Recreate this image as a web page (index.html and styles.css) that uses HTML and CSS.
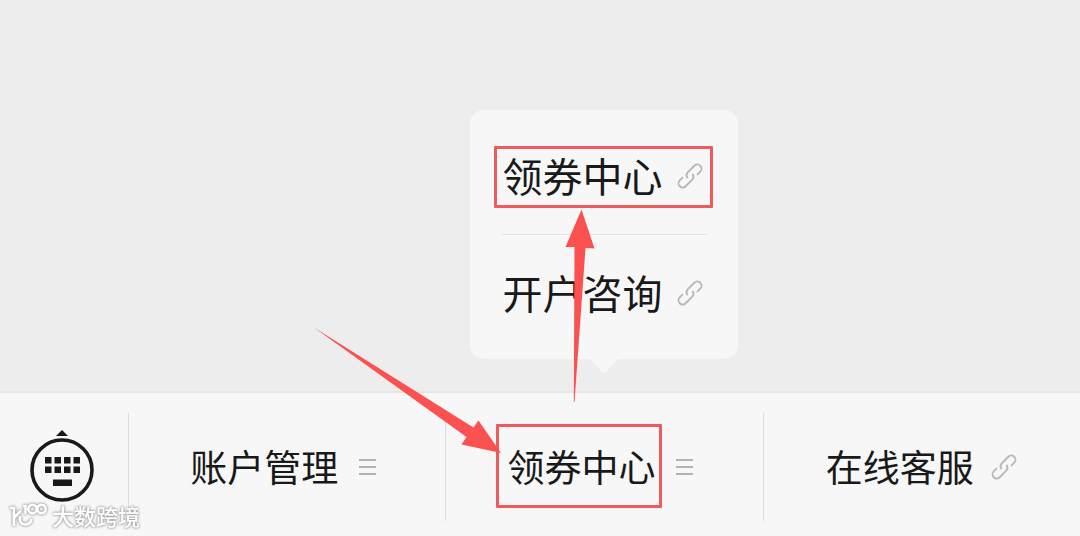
FILE: index.html
```html
<!DOCTYPE html>
<html lang="zh-CN">
<head>
<meta charset="utf-8">
<title>领券中心</title>
<link rel="stylesheet" href="styles.css">
</head>
<body>
<svg class="symbols" aria-hidden="true">
  <symbol id="link" viewBox="0 0 28 28">
    <g transform="translate(14 14) rotate(-45)" fill="none" stroke="currentColor" stroke-width="1.9" stroke-linecap="round">
      <path d="M-6.500 -4.200 H-10.300 A4.200 4.200 0 0 0 -10.300 4.200 H-1 A4.200 4.200 0 0 0 3 1"/>
      <path d="M6.500 4.200 H10.300 A4.200 4.200 0 0 0 10.300 -4.200 H1 A4.200 4.200 0 0 0 -3 -1"/>
    </g>
  </symbol>
  <symbol id="list" viewBox="0 0 30 28">
    <path d="M5 7H22M5 14H22M5 21H22" fill="none" stroke="currentColor" stroke-width="1.8"/>
  </symbol>
</svg>
<main class="chat"></main>
<nav class="bar">
  <button class="keyboard" type="button" aria-label="切换键盘">
    <svg class="keyboard-icon" viewBox="0 0 66 76" aria-hidden="true">
      <path d="M27 7 L33 1 L39 7Z" fill="#191919"/>
      <circle cx="33" cy="41" r="30" fill="none" stroke="#191919" stroke-width="3.600"/>
      <path d="M16 28h6.500v6.500h-6.500zM25.500 28h6.500v6.500h-6.500zM35 28h6.500v6.500h-6.500zM44.500 28h6.500v6.500h-6.500zM16 37.500h6.500v6.500h-6.500zM25.500 37.500h6.500v6.500h-6.500zM35 37.500h6.500v6.500h-6.500zM44.500 37.500h6.500v6.500h-6.500zM24 50.500h19v6.500H24z" fill="#191919"/>
    </svg>
  </button>
  <div class="cell">
    <button class="item" type="button"><span class="label">账户管理</span><svg class="list-icon" aria-hidden="true"><use href="#list"/></svg></button>
  </div>
  <div class="cell">
    <button class="item" type="button"><span class="label marked marked-tab">领券中心</span><svg class="list-icon" aria-hidden="true"><use href="#list"/></svg></button>
    <div class="popup">
      <a class="option marked marked-option" href="#coupons"><span class="label">领券中心</span><svg class="link-icon" aria-hidden="true"><use href="#link"/></svg></a>
      <a class="option" href="#account"><span class="label">开户咨询</span><svg class="link-icon" aria-hidden="true"><use href="#link"/></svg></a>
      <svg class="tail" viewBox="0 0 32 16" aria-hidden="true"><path d="M0 0 Q3 0 6 4 L13 12 Q16 16 19 12 L26 4 Q29 0 32 0Z" fill="#f7f7f7"/></svg>
    </div>
  </div>
  <div class="cell">
    <a class="item" href="#service"><span class="label">在线客服</span><svg class="link-icon" aria-hidden="true"><use href="#link"/></svg></a>
  </div>
</nav>
<svg class="arrows" viewBox="0 0 1080 536" aria-hidden="true">
  <path d="M314 327.500 L473.500 427.500 L478.500 420.500 L501 453 L461.500 444.500 L466.500 437Z" fill="#fb5151"/>
  <path d="M581.500 209.500 L594.500 248.500 L585.500 248 L574.500 402 L573.800 402 L574.500 247 L565.500 247Z" fill="#fb5151"/>
</svg>
<div class="watermark">
  <svg class="watermark-logo" viewBox="0 -3 42 28" aria-hidden="true">
    <g fill="none" stroke="#fff" stroke-width="2.600">
      <path d="M2 4 H6 V22 M6 14 L13 6.500 M12 12 C11 18 14 21 18 20.500 C21 20 23 18 23.500 15"/>
      <path d="M15 2 H17.500 V10"/>
      <circle cx="24.500" cy="5" r="4.200"/>
      <circle cx="33.500" cy="5" r="4.200"/>
    </g>
  </svg>
  <span>大数跨境</span>
</div>
</body>
</html>
```
FILE: styles.css
```css
* {
  box-sizing: border-box;
}

body {
  position: relative;
  display: flex;
  flex-direction: column;
  min-height: 100vh;
  margin: 0;
  background: #ededed;
  color: #191919;
  font-family: "Noto Sans CJK SC", sans-serif;
}

.symbols {
  position: absolute;
  width: 0;
  height: 0;
}

.chat {
  flex: 1;
}

.bar {
  display: flex;
  height: 145px;
  padding: 20px 0 15px;
  border-top: 2px solid #e6e6e6;
  background: #f7f7f7;
}

button {
  padding: 0;
  border: 0;
  background: none;
  color: inherit;
  font-family: inherit;
}

a {
  color: inherit;
  text-decoration: none;
}

.keyboard {
  display: flex;
  justify-content: center;
  align-items: center;
  width: 128px;
  padding-right: 4px;
}

.keyboard-icon {
  width: 66px;
  height: 76px;
}

.cell {
  position: relative;
  display: flex;
  flex: 1;
  border-left: 1px solid #dedede;
}

.item {
  display: flex;
  flex: 1;
  justify-content: center;
  align-items: center;
  gap: 16px;
  font-size: 37px;
  line-height: 56px;
}

.label {
  padding-bottom: 3px;
}

.list-icon {
  width: 30px;
  height: 28px;
  color: #b2b2b2;
}

.link-icon {
  width: 28px;
  height: 28px;
  color: #b8b8b8;
}

.popup {
  position: absolute;
  bottom: 100%;
  left: 50%;
  width: 268px;
  margin-bottom: 54px;
  margin-left: -134px;
  padding: 8px 31px 8px 32px;
  border-radius: 14px;
  background: #f7f7f7;
}

.option {
  display: flex;
  align-items: center;
  gap: 14px;
  height: 116px;
  font-size: 40px;
  line-height: 60px;
}

.option + .option {
  height: 117px;
  border-top: 1px solid #e2e2e2;
}

.tail {
  position: absolute;
  top: 100%;
  left: 50%;
  width: 32px;
  height: 16px;
  margin-left: -16px;
}

.marked {
  position: relative;
}

.marked::after {
  position: absolute;
  border: 3px solid #ee5b5b;
  border-radius: 1px;
  content: "";
}

.marked-tab::after {
  inset: -14px -7px -11px -11px;
}

.marked-option::after {
  inset: 28px -6px 26px -8px;
}

.arrows {
  position: absolute;
  top: 0;
  left: 0;
  width: 100%;
  height: 100%;
  pointer-events: none;
}

.watermark {
  position: absolute;
  bottom: 5px;
  left: 8px;
  display: flex;
  align-items: center;
  gap: 2px;
  color: #fff;
  font-size: 22px;
  font-weight: 500;
  line-height: 32px;
  filter: drop-shadow(0 0 1px #999) drop-shadow(0 0 1px #bbb);
}

.watermark-logo {
  width: 42px;
  height: 28px;
}
```
